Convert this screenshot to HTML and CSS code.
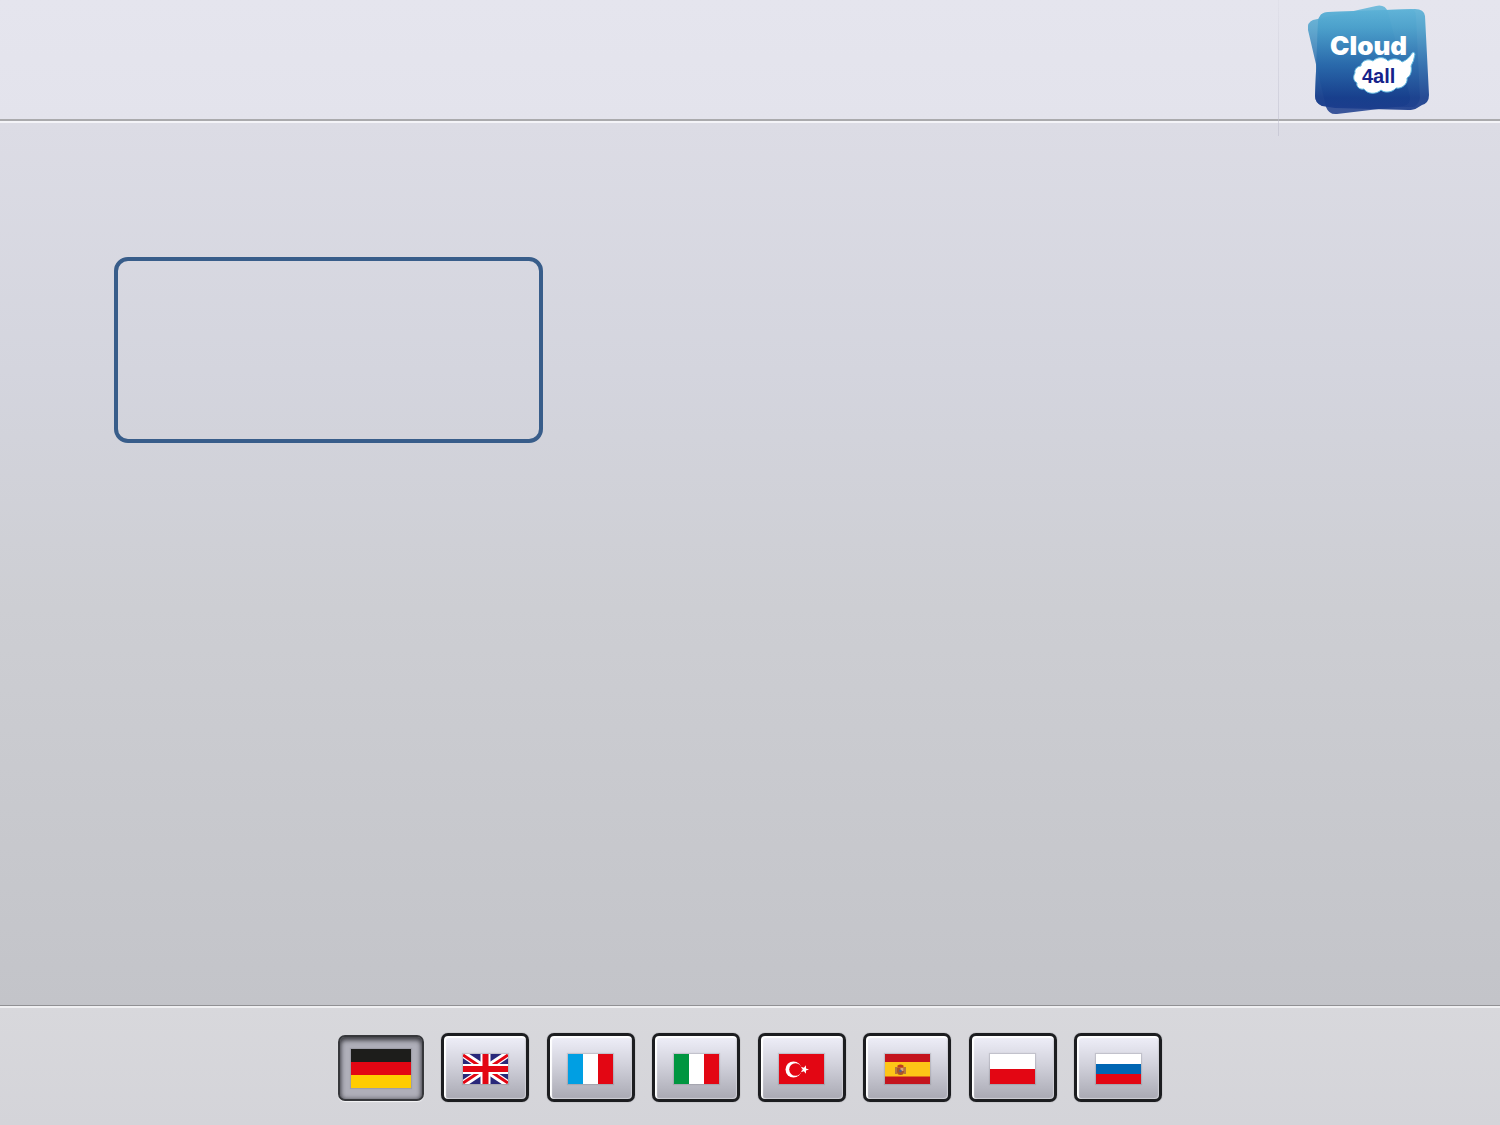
FILE: index.html
```html
<!DOCTYPE html>
<html lang="en">
<head>
<meta charset="utf-8">
<meta name="viewport" content="width=device-width, initial-scale=1">
<title>Cloud4all</title>
<link rel="stylesheet" href="styles.css">
</head>
<body>
<div class="page">
  <header class="header">
    <div class="brand">
      <svg class="logo" viewBox="1300 0 140 119" role="img" aria-label="Cloud 4all">
        <defs>
          <linearGradient id="sky" gradientUnits="userSpaceOnUse" x1="0" y1="6" x2="0" y2="114">
            <stop offset="0" stop-color="#5fb5d9"/>
            <stop offset=".2" stop-color="#4ba0cb"/>
            <stop offset=".55" stop-color="#2868aa"/>
            <stop offset=".85" stop-color="#173e8c"/>
            <stop offset="1" stop-color="#1c3b8c"/>
          </linearGradient>
        </defs>
        <g fill="url(#sky)">
          <path opacity=".85" d="M1313 20L1376 6Q1385 4 1388 12L1410 96Q1411 104 1404 106L1337 114Q1329 115 1326 107L1308 30Q1307 22 1313 20Z"/>
          <path opacity=".92" d="M1328 12L1415 9Q1424 9 1425 16L1429 95Q1429 103 1422 105L1417 108Q1414 110 1408 110L1335 108L1322 106Q1315 103 1315 96L1318 22Q1319 12 1328 12Z"/>
          <path opacity=".6" d="M1328 12L1411 9Q1416 10 1416 16L1420 98Q1419 104 1414 107L1362 107L1322 106Q1315 103 1315 96L1318 22Q1319 12 1328 12Z"/>
        </g>
        <path fill="#fff" stroke="#63bbe2" stroke-width="1" d="M1361 66C1361 61 1368 58 1373 61C1378 56 1385 57 1388 61C1393 57 1400 59 1402 62C1407 60 1410 57 1412 53Q1414 51 1415 54Q1414 61 1411 66C1412 70 1411 76 1407 78C1408 84 1402 89 1396 88C1392 93 1384 93 1381 90C1376 95 1367 94 1364 89C1359 90 1356 86 1357 83C1353 81 1353 76 1355 73C1354 69 1358 66 1361 66Z"/>
        <text class="logo-cloud" x="1330" y="55">Cloud</text>
        <text class="logo-all" x="1362" y="83">4all</text>
      </svg>
    </div>
  </header>

  <main class="content">
    <section class="panel" aria-label="Message"></section>
  </main>

  <footer class="footer">
    <nav class="languages" aria-label="Language">
      <button class="language language-active" type="button" aria-label="Deutsch" aria-pressed="true">
        <svg class="flag" viewBox="0 0 60 39" preserveAspectRatio="none"><path fill="#1d1d1b" d="M0 0h60v13H0z"/><path fill="#e30613" d="M0 13h60v13H0z"/><path fill="#fc0" d="M0 26h60v13H0z"/></svg>
      </button>
      <button class="language" type="button" aria-label="English">
        <svg class="flag" viewBox="0 0 45 30"><path fill="#29287a" d="M0 0h45v30H0z"/><path stroke="#fff" stroke-width="7" d="M0 0l45 30M45 0L0 30"/><path stroke="#e30613" stroke-width="3" d="M0 1l21 14M24 15L45 1M0 29l21-14M24 15l21 14"/><path stroke="#fff" stroke-width="10" d="M22.500 0v30M0 15h45"/><path stroke="#e30613" stroke-width="6" d="M22.500 0v30M0 15h45"/></svg>
      </button>
      <button class="language" type="button" aria-label="Français">
        <svg class="flag" viewBox="0 0 45 30"><path fill="#009fe3" d="M0 0h15v30H0z"/><path fill="#fff" d="M15 0h15v30H15z"/><path fill="#e30613" d="M30 0h15v30H30z"/></svg>
      </button>
      <button class="language" type="button" aria-label="Italiano">
        <svg class="flag" viewBox="0 0 45 30"><path fill="#009640" d="M0 0h15v30H0z"/><path fill="#fff" d="M15 0h15v30H15z"/><path fill="#e30613" d="M30 0h15v30H30z"/></svg>
      </button>
      <button class="language" type="button" aria-label="Türkçe">
        <svg class="flag" viewBox="0 0 45 30"><path fill="#e30613" d="M0 0h45v30H0z"/><circle cx="14.500" cy="15.500" r="8" fill="#fff"/><circle cx="16.500" cy="15.500" r="6.300" fill="#e30613"/><path fill="#fff" d="M30 15.500l-3 1.100-.1 3.200-2-2.500-3 .9 1.800-2.700-1.800-2.700 3 .9 2-2.500.1 3.200z"/></svg>
      </button>
      <button class="language" type="button" aria-label="Español">
        <svg class="flag" viewBox="0 0 45 30"><path fill="#c4141d" d="M0 0h45v30H0z"/><path fill="#fdc517" d="M0 8h45v14.500H0z"/><path fill="#b5773f" d="M10 13h2v7h-2zM19 13h2v7h-2z"/><path fill="#a9532c" d="M12 13.500h7V18q0 3-3.500 3T12 18z"/><path fill="#bd3a23" d="M12.500 11.500q3-2 6 0v2h-6z"/><path fill="#d9a77a" d="M15.500 14h3v3h-3z"/><circle cx="15.500" cy="17" r="1.300" fill="#51608f"/></svg>
      </button>
      <button class="language" type="button" aria-label="Polski">
        <svg class="flag" viewBox="0 0 45 30"><path fill="#fff" d="M0 0h45v15H0z"/><path fill="#e30613" d="M0 15h45v15H0z"/></svg>
      </button>
      <button class="language" type="button" aria-label="Русский">
        <svg class="flag" viewBox="0 0 45 30"><path fill="#fff" d="M0 0h45v10H0z"/><path fill="#0066b3" d="M0 10h45v10H0z"/><path fill="#e30613" d="M0 20h45v10H0z"/></svg>
      </button>
    </nav>
  </footer>
</div>
</body>
</html>
```
FILE: styles.css
```css
* {
  box-sizing: border-box;
}

body {
  margin: 0;
  font-family: "Liberation Sans", Arial, sans-serif;
}

.page {
  display: flex;
  flex-direction: column;
  min-height: 100vh;
}

.header {
  display: flex;
  justify-content: flex-end;
  height: 121px;
  background: linear-gradient(#e5e5ee, #e3e3ec);
  border-bottom: 2px solid #aaaaad;
}

.brand {
  position: relative;
  width: 222px;
  padding-left: 22px;
}

/* Faint divider that runs past the header rule */
.brand::before {
  content: "";
  position: absolute;
  top: 0;
  left: 0;
  width: 1px;
  height: 136px;
  background: linear-gradient(rgba(190, 190, 205, .1), rgba(190, 190, 205, .6));
}

.logo {
  display: block;
  width: 140px;
  height: 119px;
}

.logo-cloud {
  font-family: Inter, "Liberation Sans", sans-serif;
  font-size: 26px;
  font-weight: 900;
  fill: #fff;
}

.logo-all {
  font-size: 20px;
  font-weight: 700;
  fill: #16218a;
}

.content {
  flex: 1;
  padding: 134px 114px;
  background: linear-gradient(#dcdce5, #d4d5de 28%, #cdced3 55%, #c3c4c9);
  border-top: 2px solid #f4f4f8;
}

.panel {
  width: 429px;
  max-width: 100%;
  height: 186px;
  border: 4px solid #385d8a;
  border-radius: 14px;
}

.footer {
  display: flex;
  justify-content: center;
  height: 120px;
  padding-top: 26px;
  background: linear-gradient(#d8d8dc, #d4d4d9);
  border-top: 1px solid #919194;
  box-shadow: inset 0 2px #f0f0f2;
}

.languages {
  display: flex;
  justify-content: space-between;
  align-items: center;
  width: 825px;
  height: 71px;
}

.language {
  display: flex;
  justify-content: center;
  align-items: center;
  width: 88px;
  height: 69px;
  padding: 0;
  background: linear-gradient(#efeff9, #d2d2dc 45%, #a9a9b3);
  border: 3px solid #1c1d20;
  border-radius: 7px;
  box-shadow: inset 1px 1px 1px 1px #fff, inset -1px -1px 1px #c8c8d0, 0 0 1px #66666a;
  cursor: pointer;
}

.language-active {
  width: 86px;
  height: 66px;
  background: #afafb9;
  border: 2px solid #36373b;
  box-shadow: inset 0 3px 5px #3e3e44, inset 0 0 5px #606068, 0 1px 1px #f4f4f6;
}

.flag {
  width: 45px;
  height: 30px;
  margin-top: 2px;
  box-shadow: 0 0 1px 1px rgba(90, 90, 100, .2);
}

.language-active .flag {
  width: 60px;
  height: 39px;
}
```
